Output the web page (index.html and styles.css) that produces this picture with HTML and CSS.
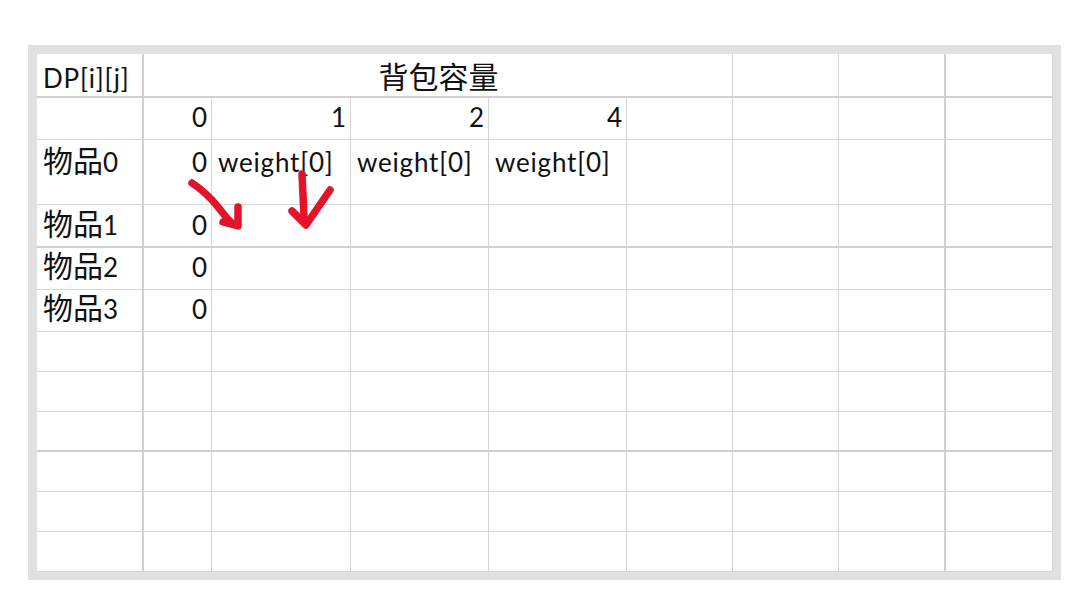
FILE: index.html
```html
<!DOCTYPE html>
<html lang="zh">
<head>
<meta charset="utf-8">
<title>DP table</title>
<link rel="stylesheet" href="styles.css">
</head>
<body>
<div class="frame">
  <div class="sheet">
    <div class="row row-1">
      <div class="cell">DP[i][j]</div>
      <div class="cell title"><span class="zh">背包容量</span></div>
      <div class="cell"></div>
      <div class="cell sep"></div>
      <div class="cell"></div>
    </div>
    <div class="row row-2">
      <div class="cell"></div>
      <div class="cell num">0</div>
      <div class="cell num">1</div>
      <div class="cell num">2</div>
      <div class="cell num">4</div>
      <div class="cell"></div>
      <div class="cell"></div>
      <div class="cell sep"></div>
      <div class="cell"></div>
    </div>
    <div class="row row-3">
      <div class="cell"><span class="zh">物品</span>0</div>
      <div class="cell num">0</div>
      <div class="cell">weight[0]</div>
      <div class="cell">weight[0]</div>
      <div class="cell">weight[0]</div>
      <div class="cell"></div>
      <div class="cell"></div>
      <div class="cell sep"></div>
      <div class="cell"></div>
    </div>
    <div class="row row-4">
      <div class="cell"><span class="zh">物品</span>1</div>
      <div class="cell num">0</div>
      <div class="cell"></div>
      <div class="cell"></div>
      <div class="cell"></div>
      <div class="cell"></div>
      <div class="cell"></div>
      <div class="cell sep"></div>
      <div class="cell"></div>
    </div>
    <div class="row row-5">
      <div class="cell"><span class="zh">物品</span>2</div>
      <div class="cell num">0</div>
      <div class="cell"></div>
      <div class="cell"></div>
      <div class="cell"></div>
      <div class="cell"></div>
      <div class="cell"></div>
      <div class="cell sep"></div>
      <div class="cell"></div>
    </div>
    <div class="row row-6">
      <div class="cell"><span class="zh">物品</span>3</div>
      <div class="cell num">0</div>
      <div class="cell"></div>
      <div class="cell"></div>
      <div class="cell"></div>
      <div class="cell"></div>
      <div class="cell"></div>
      <div class="cell sep"></div>
      <div class="cell"></div>
    </div>
    <div class="row">
      <div class="cell"></div><div class="cell"></div><div class="cell"></div><div class="cell"></div><div class="cell"></div><div class="cell"></div><div class="cell"></div><div class="cell sep"></div><div class="cell"></div>
    </div>
    <div class="row">
      <div class="cell"></div><div class="cell"></div><div class="cell"></div><div class="cell"></div><div class="cell"></div><div class="cell"></div><div class="cell"></div><div class="cell sep"></div><div class="cell"></div>
    </div>
    <div class="row row-thick">
      <div class="cell"></div><div class="cell"></div><div class="cell"></div><div class="cell"></div><div class="cell"></div><div class="cell"></div><div class="cell"></div><div class="cell sep"></div><div class="cell"></div>
    </div>
    <div class="row">
      <div class="cell"></div><div class="cell"></div><div class="cell"></div><div class="cell"></div><div class="cell"></div><div class="cell"></div><div class="cell"></div><div class="cell sep"></div><div class="cell"></div>
    </div>
    <div class="row">
      <div class="cell"></div><div class="cell"></div><div class="cell"></div><div class="cell"></div><div class="cell"></div><div class="cell"></div><div class="cell"></div><div class="cell sep"></div><div class="cell"></div>
    </div>
    <div class="row">
      <div class="cell"></div><div class="cell"></div><div class="cell"></div><div class="cell"></div><div class="cell"></div><div class="cell"></div><div class="cell"></div><div class="cell sep"></div><div class="cell"></div>
    </div>
  </div>
</div>
<svg class="ink" width="1078" height="606" viewBox="0 0 1078 606" aria-hidden="true">
  <g fill="none" stroke="#e3142a" stroke-width="7.5" stroke-linecap="round" stroke-linejoin="round">
    <path d="M192 183 Q207 193 218 207 T231 222"/>
    <path d="M238 207 L238 226 L223 222"/>
    <path d="M302 174 Q303 196 304 217"/>
    <path d="M292 211 L306 225 L330 190"/>
  </g>
</svg>
</body>
</html>
```

FILE: styles.css
```css
html, body {
  margin: 0;
  padding: 0;
  background: #ffffff;
}

body {
  position: relative;
  width: 1078px;
  height: 606px;
  overflow: hidden;
  font-family: "Lato", "Noto Sans CJK SC", sans-serif;
  font-size: 26px;
  letter-spacing: 0.8px;
  color: #111111;
}

.frame {
  margin: 45px 0 0 28px;
  width: 1033px;
  height: 535px;
  box-sizing: border-box;
  padding: 9px 8px 8px 9px;
  background: #e1e1e1;
}

.sheet {
  display: grid;
  grid-template-columns: 107px 68px 139px 138px 138px 106px 106px 107px 107px;
  grid-template-rows: 44px 42px 65px 43px 42px 42px repeat(6, 40px);
  width: 1016px;
  height: 518px;
  background: #ffffff;
}

.row {
  display: contents;
}

.cell {
  box-sizing: border-box;
  border-right: 1px solid #d6d6d6;
  border-bottom: 1px solid #d6d6d6;
  padding: 3px 5px 0 6px;
  line-height: 32px;
  white-space: nowrap;
}

.row > .cell:first-child {
  border-right: 2px solid #d0d0d0;
}

.cell.sep {
  border-right: 2px solid #d0d0d0;
}

.num {
  text-align: right;
  padding-right: 3px;
}

.title {
  grid-column: span 5;
  text-align: center;
}

.zh {
  font-family: "Noto Sans CJK SC", sans-serif;
  font-size: 30px;
  line-height: 24px;
  letter-spacing: 0;
}

.row-1 > .cell {
  border-bottom: 2px solid #d0d0d0;
  padding-top: 8px;
}

.row-1 > .title {
  padding-left: 6px;
}

.row-3 > .cell {
  padding-top: 6px;
}

.row-4 > .cell {
  border-bottom: 2px solid #d0d0d0;
  padding-top: 4px;
}

.row-thick > .cell {
  border-bottom: 2px solid #d0d0d0;
}

.ink {
  position: absolute;
  left: 0;
  top: 0;
  pointer-events: none;
}
```
